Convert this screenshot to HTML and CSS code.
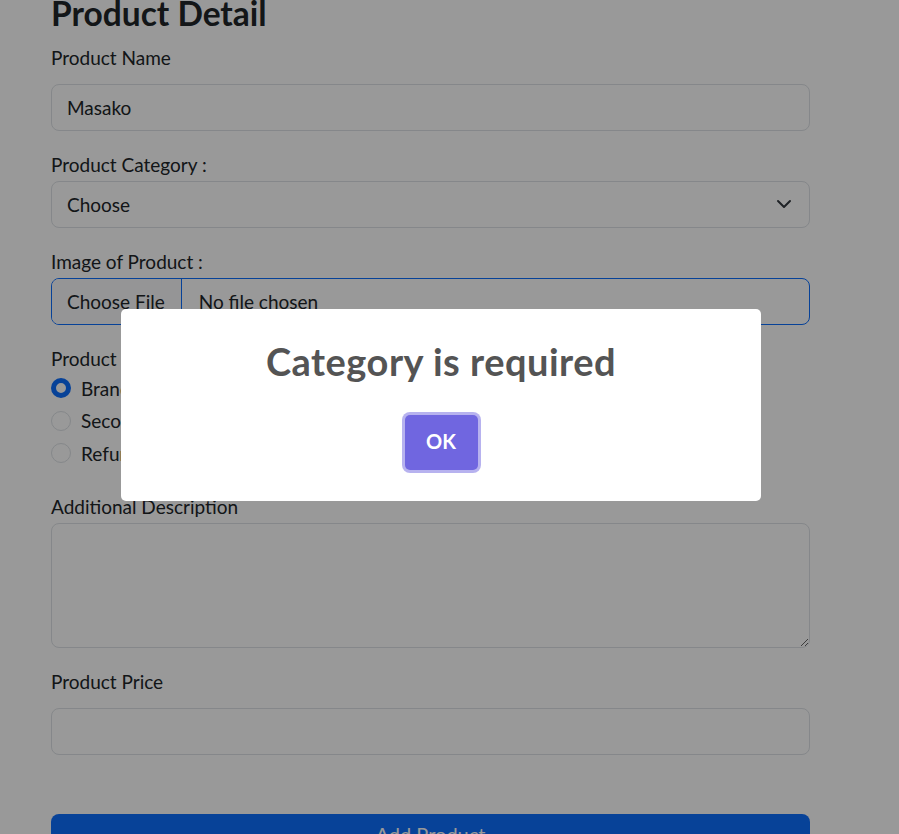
FILE: index.html
```html
<!DOCTYPE html>
<html lang="en">
<head>
<meta charset="utf-8">
<title>Product Detail</title>
<link rel="stylesheet" href="styles.css">
</head>
<body>
<main class="page">
  <h1 class="page-title">Product Detail</h1>
  <form class="form">
    <div class="group">
      <label class="label label-spaced">Product Name</label>
      <div class="control"><span class="control-text">Masako</span></div>
    </div>
    <div class="group">
      <label class="label">Product Category :</label>
      <div class="control select">
        <span class="control-text">Choose</span>
        <svg class="chevron" width="16" height="12" viewBox="0 0 16 16"><path d="M2 5l6 6 6-6" fill="none" stroke="#343a40" stroke-width="2" stroke-linecap="round" stroke-linejoin="round"/></svg>
      </div>
    </div>
    <div class="group">
      <label class="label">Image of Product :</label>
      <div class="control file">
        <span class="file-btn">Choose File</span>
        <span class="file-name">No file chosen</span>
      </div>
    </div>
    <div class="group group-radios">
      <label class="label label-flush">Product Freshness</label>
      <div class="radio-row"><span class="radio radio-checked"></span><span class="radio-text">Brand New</span></div>
      <div class="radio-row"><span class="radio"></span><span class="radio-text">Second Hand</span></div>
      <div class="radio-row"><span class="radio"></span><span class="radio-text">Refurbished</span></div>
    </div>
    <div class="group">
      <label class="label">Additional Description</label>
      <textarea class="textarea"></textarea>
    </div>
    <div class="group group-last">
      <label class="label label-spaced">Product Price</label>
      <div class="control"></div>
    </div>
    <div class="submit" role="button">Add Product</div>
  </form>
</main>
<div class="overlay"></div>
<div class="modal" role="dialog">
  <h2 class="modal-title">Category is required</h2>
  <div class="modal-actions">
    <button type="button" class="modal-ok">OK</button>
  </div>
</div>
</body>
</html>
```
FILE: styles.css
```css
* { box-sizing: border-box; }
html, body { margin: 0; padding: 0; }
body {
  font-family: Lato, "Open Sans", sans-serif;
  color: #212529;
  background: #fff;
  overflow: hidden;
  height: 834px;
}
.page {
  width: 759px;
  margin-left: 51px;
}
.page-title {
  font-size: 33.5px;
  font-weight: 700;
  line-height: 1.2;
  margin: -7px 0 11px;
}
.group { margin-bottom: 20.5px; }
.group-radios { margin-bottom: 23.5px; }
.group-last { margin-bottom: 59px; }
.label {
  display: block;
  font-size: 19px;
  line-height: 27px;
  margin-bottom: 2.5px;
}
.label-spaced { margin-bottom: 12.5px; }
.label-flush { margin-bottom: 0; }
.control {
  height: 47px;
  border: 1px solid #dee2e6;
  border-radius: 8px;
  background: #fff;
  display: flex;
  align-items: center;
  font-size: 19px;
}
.control-text { padding-left: 15px; }
.select { justify-content: space-between; }
.chevron { margin-right: 17px; width: 16px; height: 16px; }
.file {
  border-color: #0d6efd;
  overflow: hidden;
}
.file-btn {
  height: 100%;
  display: flex;
  align-items: center;
  padding: 0 16px 0 15px;
  background: #f8f9fa;
  border-right: 1px solid #0d6efd;
}
.file-name { padding-left: 17px; }
.radio-row {
  height: 32.5px;
  display: flex;
  align-items: center;
  font-size: 19px;
}
.radio {
  width: 20px;
  height: 20px;
  border-radius: 50%;
  border: 1px solid #dee2e6;
  background: #fff;
  margin-right: 10px;
  flex: none;
}
.radio-checked {
  border: 5px solid #0d6efd;
  background: #fff;
}
.textarea {
  display: block;
  width: 100%;
  height: 125px;
  border: 1px solid #dee2e6;
  border-radius: 8px;
  background: #fff;
  resize: vertical;
  font-family: inherit;
}
.submit {
  height: 48px;
  border-radius: 8px;
  background: #0d6efd;
  color: #fff;
  font-size: 20px;
  line-height: 24px;
  padding-top: 8px;
  text-align: center;
}
.overlay {
  position: fixed;
  inset: 0;
  background: rgba(0, 0, 0, 0.4);
}
.modal {
  position: fixed;
  left: 121px;
  top: 309px;
  width: 640px;
  height: 192px;
  background: #fff;
  border-radius: 5px;
  display: flex;
  flex-direction: column;
  align-items: center;
  padding-top: 31px;
}
.modal-title {
  margin: 0;
  font-size: 38px;
  line-height: 42px;
  letter-spacing: 0.5px;
  font-weight: 700;
  color: #545454;
}
.modal-actions { margin-top: 33px; }
.modal-ok {
  width: 73px;
  height: 55px;
  border: 0;
  border-radius: 5px;
  background: #7066e0;
  color: #fff;
  font-family: inherit;
  font-size: 20px;
  font-weight: 700;
  padding: 0 0 3px;
  box-shadow: 0 0 0 3px rgba(112, 102, 224, 0.5);
}
```
